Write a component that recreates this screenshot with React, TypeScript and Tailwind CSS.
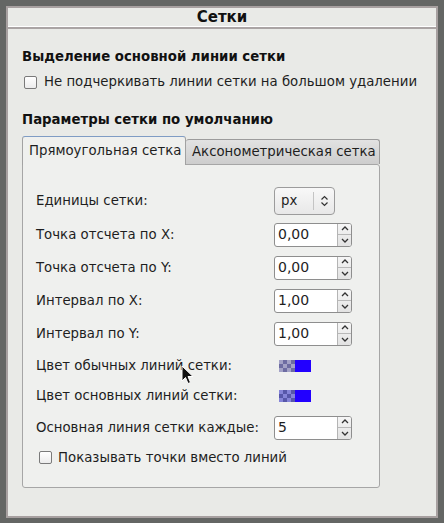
import React from "react";

const font = { fontFamily: '"DejaVu Sans", "Liberation Sans", sans-serif' };

function Checkbox() {
  return (
    <div className="w-[13px] h-[13px] rounded-[2px] border border-[#7a7a7a] bg-gradient-to-b from-[#ffffff] to-[#ececec] shrink-0" />
  );
}

function Spin({ value }: { value: string }) {
  return (
    <div className="w-[78px] h-[24px] rounded-[3px] border border-[#8e8e8e] bg-white flex overflow-hidden">
      <div className="flex-1 flex items-center pl-[3px] text-[14px] text-[#1e1e1e]">{value}</div>
      <div className="w-[14px] flex flex-col border-l border-[#b4b4b4] bg-gradient-to-b from-[#f6f6f6] to-[#e2e2e2]">
        <div className="flex-1 flex items-center justify-center border-b border-[#b8b8b8]">
          <svg width="8" height="5" viewBox="0 0 8 5"><path d="M1 4 L4 1 L7 4" fill="none" stroke="#333" strokeWidth="1.3" /></svg>
        </div>
        <div className="flex-1 flex items-center justify-center">
          <svg width="8" height="5" viewBox="0 0 8 5"><path d="M1 1 L4 4 L7 1" fill="none" stroke="#333" strokeWidth="1.3" /></svg>
        </div>
      </div>
    </div>
  );
}

function Combo() {
  return (
    <div className="w-[61px] h-[28px] rounded-[4px] border border-[#9c9c9c] bg-gradient-to-b from-[#f8f8f8] to-[#e8e8e8] flex items-center">
      <div className="w-[38px] pl-[6px] text-[13.3px] text-[#1e1e1e]">px</div>
      <div className="w-px h-[18px] bg-[#c4c4c4]" />
      <div className="flex-1 flex items-center justify-center">
        <svg width="9" height="12" viewBox="0 0 9 12">
          <path d="M1.5 4.5 L4.5 1.5 L7.5 4.5" fill="none" stroke="#333" strokeWidth="1.2" />
          <path d="M1.5 7.5 L4.5 10.5 L7.5 7.5" fill="none" stroke="#333" strokeWidth="1.2" />
        </svg>
      </div>
    </div>
  );
}

function Swatch({ light, dark }: { light: string; dark: string }) {
  const cells = [];
  for (let r = 0; r < 3; r++) {
    for (let c = 0; c < 4; c++) {
      cells.push(
        <div key={r + "-" + c} className="w-[4px] h-[4px]" style={{ background: (r + c) % 2 === 0 ? light : dark }} />
      );
    }
  }
  return (
    <div className="flex ml-[5px]">
      <div className="grid grid-cols-4 w-[16px] h-[12px]">{cells}</div>
      <div className="w-[16px] h-[12px] bg-[#2200ff]" />
    </div>
  );
}

function Row({ h, label, children }: { h: string; label: string; children: React.ReactNode }) {
  return (
    <div className={`flex items-center ${h}`}>
      <div className="w-[238px] text-[13.3px] text-[#1e1e1e]">{label}</div>
      {children}
    </div>
  );
}

export default function App() {
  return (
    <div className="w-[444px] h-[523px] bg-[#646664] pt-[6px] pl-[6px] pr-[6px] pb-[5px]" style={font}>
      <div className="relative w-full h-full border-2 border-[#a7a0a0] bg-[#e9eae7] flex flex-col">
        <div className="h-[19px] flex items-center justify-center text-[15px] font-bold text-[#111] bg-[#e9eae7] border-b border-white">
          Сетки
        </div>
        <div className="h-[2px] bg-[#aaa4a4]" />
        <div className="pl-[14px] pt-[20px] flex flex-col">
          <div className="h-[16px] flex items-center text-[13.3px] font-bold text-[#111]">
            Выделение основной линии сетки
          </div>
          <div className="h-[20px] mt-[7px] flex items-center pl-[2px] gap-[7px]">
            <Checkbox />
            <span className="text-[13.3px] text-[#1e1e1e]">Не подчеркивать линии сетки на большом удалении</span>
          </div>
          <div className="h-[16px] mt-[20px] flex items-center text-[13.3px] font-bold text-[#111]">
            Параметры сетки по умолчанию
          </div>
          <div className="mt-[8px] w-[358px] flex flex-col">
            <div className="h-[28px] flex items-end">
              <div className="relative z-10 w-[164px] h-[29px] -mb-px rounded-t-[3px] border border-[#a2a2a2] border-t-[#7f9cc4] border-b-0 bg-[#eff0ee] flex items-center pl-[6px] text-[13.3px] text-[#1e1e1e]">
                Прямоугольная сетка
              </div>
              <div className="w-[194px] h-[25px] rounded-t-[3px] border border-[#9c9c9c] border-l-0 border-b-0 bg-gradient-to-b from-[#e2e2e2] to-[#cdcdcd] flex items-center pl-[6px] text-[13.3px] text-[#1e1e1e]">
                Аксонометрическая сетка
              </div>
            </div>
            <div className="h-[324px] border border-[#a6a6a6] rounded-b-[3px] rounded-tr-[3px] bg-[#eff0ee] pt-[18px] pl-[13px] flex flex-col">
              <Row h="h-[35px]" label="Единицы сетки:"><Combo /></Row>
              <Row h="h-[33px]" label="Точка отсчета по X:"><Spin value="0,00" /></Row>
              <Row h="h-[33px]" label="Точка отсчета по Y:"><Spin value="0,00" /></Row>
              <Row h="h-[33px]" label="Интервал по X:"><Spin value="1,00" /></Row>
              <Row h="h-[33px]" label="Интервал по Y:"><Spin value="1,00" /></Row>
              <Row h="h-[32px]" label="Цвет обычных линий сетки:"><Swatch light="#a3a2c6" dark="#6d6ca2" /></Row>
              <Row h="h-[28px]" label="Цвет основных линий сетки:"><Swatch light="#8584d8" dark="#5757aa" /></Row>
              <Row h="h-[35px]" label="Основная линия сетки каждые:"><Spin value="5" /></Row>
              <div className="h-[25px] flex items-center pl-[3px] gap-[6px]">
                <Checkbox />
                <span className="text-[13.3px] text-[#1e1e1e]">Показывать точки вместо линий</span>
              </div>
            </div>
          </div>
        </div>
        <svg className="absolute left-[173px] top-[357px]" width="13" height="20" viewBox="0 0 13 20">
          <path d="M1 1 L1 16 L4.5 12.5 L7 18.5 L9.5 17.5 L7 11.5 L12 11.5 Z" fill="#111" stroke="#fff" strokeWidth="1" strokeLinejoin="round" />
        </svg>
      </div>
    </div>
  );
}
